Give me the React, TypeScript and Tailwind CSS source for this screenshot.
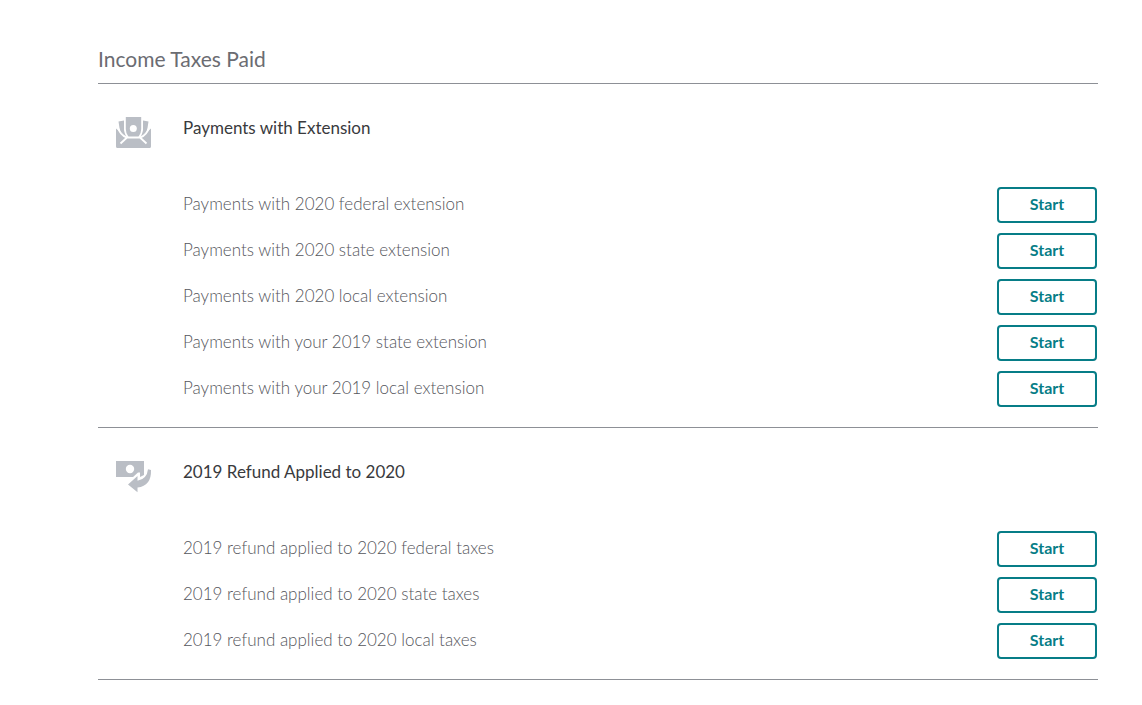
import type { ReactNode } from 'react';

type TaxSection = {
  id: string;
  title: string;
  icon: ReactNode;
  items: string[];
};

const EnvelopeIcon = () => (
  <svg width="36" height="32" viewBox="0 0 36 32" aria-hidden="true">
    <path d="M0 11.500L10 20h15l10-8.500v18q0 1.500-1.500 1.500h-32Q0 31 0 29.500z" fill="#babec5" />
    <path d="M2.500 4.500L8 3.500V13l3.500 7Q4.500 17 3.500 11zM32.500 4.500L27 3.500V13l-3.500 7Q30.500 17 31.500 11z" fill="#babec5" />
    <path d="M1.800 10.500Q4 18 10.500 20.500M33.200 10.500Q31 18 24.500 20.500" fill="none" stroke="#fff" strokeWidth="1.600" />
    <path d="M9 0h17v12q0 5-3 8.500H12Q9 17 9 12z" fill="#babec5" />
    <path d="M9 0v12q0 5 3 8.500M26 0v12q0 5-3 8.500" fill="none" stroke="#fff" strokeWidth="1.600" />
    <path d="M4.500 26.500l6.500-6h13l6.500 6" fill="none" stroke="#fff" strokeWidth="1.800" />
    <circle cx="17.300" cy="11.500" r="3.500" fill="#fff" />
  </svg>
);

const RefundIcon = () => (
  <svg width="36" height="32" viewBox="0 0 36 32" aria-hidden="true">
    <path d="M0 0h28v14l-4 2v-4.500h-2L17 16H0z" fill="#babec5" />
    <circle cx="14" cy="8" r="4.200" fill="#fff" />
    <path d="M12 23.500l9.500-8.500v4.800Q31 18 32 8.200l3 .8Q35.500 25 21.500 26.500v4.800z" fill="#babec5" />
  </svg>
);

const sections: TaxSection[] = [
  {
    id: 'extension',
    title: 'Payments with Extension',
    icon: <EnvelopeIcon />,
    items: [
      'Payments with 2020 federal extension',
      'Payments with 2020 state extension',
      'Payments with 2020 local extension',
      'Payments with your 2019 state extension',
      'Payments with your 2019 local extension',
    ],
  },
  {
    id: 'refund',
    title: '2019 Refund Applied to 2020',
    icon: <RefundIcon />,
    items: [
      '2019 refund applied to 2020 federal taxes',
      '2019 refund applied to 2020 state taxes',
      '2019 refund applied to 2020 local taxes',
    ],
  },
];

const Section = ({ id, title, icon, items }: TaxSection) => (
  <section aria-labelledby={id} className="flex border-b border-[#8d9096] pt-8 pb-5">
    <div className="w-[85px] shrink-0 pl-[18px] pt-px">{icon}</div>
    <div className="flex-1 pr-px">
      <h2 id={id} className="text-[17px] leading-6 text-[#393a3d]">
        {title}
      </h2>
      <ul className="mt-[47px] flex flex-col gap-[10px]">
        {items.map((item, index) => (
          <li key={item} className="flex items-center justify-between">
            <span id={`${id}-${index}`} className="pb-0.5 text-[17px] leading-6 font-light text-[#55565c]">
              {item}
            </span>
            <button
              type="button"
              aria-describedby={`${id}-${index}`}
              className="h-9 w-[100px] shrink-0 rounded-[4px] border-2 border-[#077d87] bg-white pb-0.5 text-base font-bold text-[#077d87]"
            >
              Start
            </button>
          </li>
        ))}
      </ul>
    </div>
  </section>
);

const App = () => (
  <main className="bg-white pr-11 pb-6 pl-[98px] pt-[45px] font-[Lato,sans-serif]">
    <h1 className="border-b border-[#8d9096] pb-[10px] text-[21px] leading-7 text-[#6b6c72]">Income Taxes Paid</h1>
    {sections.map((section) => (
      <Section key={section.id} {...section} />
    ))}
  </main>
);

export default App;
